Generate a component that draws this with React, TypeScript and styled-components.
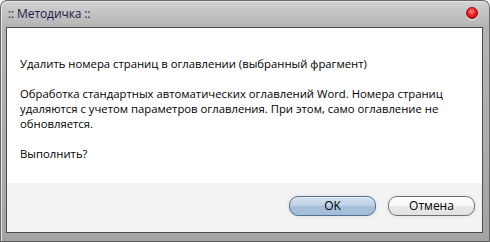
import React from "react";
import styled, { createGlobalStyle } from "styled-components";

const GlobalStyle = createGlobalStyle`
  html, body {
    margin: 0;
    padding: 0;
    background: #ffffff;
  }
  body {
    font-family: "Open Sans", "Noto Sans", sans-serif;
  }
`;

const Window = styled.div`
  width: 490px;
  height: 242px;
  box-sizing: border-box;
  display: flex;
  flex-direction: column;
  border: 1px solid #6a6a6a;
  border-bottom-color: #5a5a5a;
  border-radius: 7px 7px 0 0;
  background: linear-gradient(to bottom, #d2d2d2 0px, #b4b4b4 26px, #a4a4a4 100%);
  padding: 0 6px 8px 5px;
  box-shadow: inset 1px 1px 0 #e6e6e6;
`;

const TitleBar = styled.div`
  height: 25px;
  display: flex;
  align-items: center;
  justify-content: space-between;
  padding: 0 2px 1px 2px;
`;

const Title = styled.span`
  font-size: 12px;
  color: #1b1b45;
  letter-spacing: -0.1px;
`;

const CloseButton = styled.button`
  width: 12px;
  height: 12px;
  padding: 0;
  margin: 0 3px 1px 0;
  border-radius: 50%;
  border: 1px solid #8a1010;
  background: radial-gradient(circle at 45% 35%, #ff8a8a 0, #f02020 45%, #b00000 100%);
  box-shadow: 0 1px 1px #f4f4f4;
`;

const Client = styled.div`
  flex: 1;
  display: flex;
  flex-direction: column;
  border: 1px solid #4c4c4c;
  background: #ffffff;
`;

const Body = styled.div`
  flex: 1;
  padding: 28px 13px 0 13px;
  font-size: 11.3px;
  line-height: 15px;
  color: #000000;
`;

const Paragraph = styled.p`
  margin: 0 0 15px 0;
  white-space: nowrap;
`;

const Footer = styled.div`
  height: 49px;
  background: #f3f3f3;
  display: flex;
  justify-content: flex-end;
  align-items: flex-start;
  gap: 12px;
  padding: 13px 7px 0 0;
  box-sizing: border-box;
`;

const Button = styled.button<{ $primary?: boolean }>`
  width: 87px;
  height: 20px;
  box-sizing: border-box;
  border-radius: 9px;
  font-family: "Open Sans", "Noto Sans", sans-serif;
  font-size: 12px;
  line-height: 16px;
  padding: 0;
  color: #000000;
  border: 1px solid ${(p) => (p.$primary ? "#4f6f94" : "#707070")};
  background: ${(p) =>
    p.$primary
      ? "linear-gradient(to bottom, #d4e2f0 0%, #bdd0e4 50%, #a9c0d9 51%, #a4bcd6 100%)"
      : "linear-gradient(to bottom, #ffffff 0%, #f6f6f6 50%, #e8e8e8 51%, #e2e2e2 100%)"};
  box-shadow: inset 0 1px 0 ${(p) => (p.$primary ? "#e6eef7" : "#ffffff")},
    0 0 0 2px #ececec;
`;

export default function App() {
  return (
    <>
      <GlobalStyle />
      <Window>
        <TitleBar>
          <Title>:: Методичка ::</Title>
          <CloseButton aria-label="Закрыть" />
        </TitleBar>
        <Client>
          <Body>
            <Paragraph>Удалить номера страниц в оглавлении (выбранный фрагмент)</Paragraph>
            <Paragraph>
              Обработка стандартных автоматических оглавлений Word. Номера страниц
              <br />
              удаляются с учетом параметров оглавления. При этом, само оглавление не
              <br />
              обновляется.
            </Paragraph>
            <Paragraph>Выполнить?</Paragraph>
          </Body>
          <Footer>
            <Button $primary>OK</Button>
            <Button>Отмена</Button>
          </Footer>
        </Client>
      </Window>
    </>
  );
}
